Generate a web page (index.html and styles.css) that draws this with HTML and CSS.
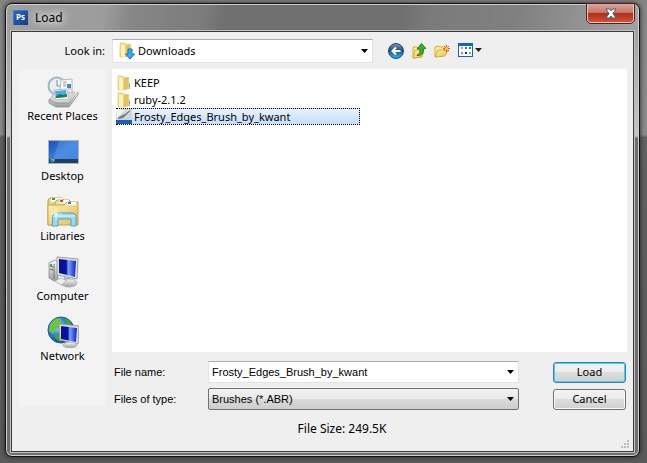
FILE: index.html
```html
<!DOCTYPE html>
<html lang="en">
<head>
<meta charset="utf-8">
<title>Load</title>
<link rel="stylesheet" href="styles.css">
</head>
<body>
<svg class="defs" width="0" height="0" aria-hidden="true">
  <defs>
    <linearGradient id="gold" x1="0" y1="0" x2="1" y2="1"><stop offset="0" stop-color="#fdf3bd"/><stop offset="1" stop-color="#e3bb58"/></linearGradient>
    <linearGradient id="blue" x1="0" y1="0" x2="1" y2="1"><stop offset="0" stop-color="#1a4fb4"/><stop offset=".5" stop-color="#3d80dc"/><stop offset="1" stop-color="#2f70d2"/></linearGradient>
    <linearGradient id="navy" x1="0" y1="0" x2="1" y2="1"><stop offset="0" stop-color="#2c6cc0"/><stop offset="1" stop-color="#123c88"/></linearGradient>
    <linearGradient id="screen" x1="0" y1="0" x2="1" y2="0"><stop offset="0" stop-color="#0a1480"/><stop offset=".42" stop-color="#0510a8"/><stop offset=".55" stop-color="#7ea2f2"/><stop offset="1" stop-color="#0b22c8"/></linearGradient>
    <linearGradient id="steel" x1="0" y1="0" x2="0" y2="1"><stop offset="0" stop-color="#fafafa"/><stop offset="1" stop-color="#9a9da0"/></linearGradient>
    <linearGradient id="back" x1="0" y1="0" x2="0" y2="1"><stop offset="0" stop-color="#8798a8"/><stop offset=".45" stop-color="#1c5288"/><stop offset="1" stop-color="#35b6e6"/></linearGradient>
    <radialGradient id="globe" cx=".35" cy=".35" r=".7"><stop offset="0" stop-color="#a5dcff"/><stop offset=".5" stop-color="#2f7fd6"/><stop offset="1" stop-color="#113f92"/></radialGradient>
    <symbol id="folder" viewBox="0 0 16 16">
      <path d="M2 1h5l1 2v12H2z" fill="#f3dc8c" stroke="#d9bd6b" stroke-width=".6"/>
      <path d="M7 2h6v12l-5 1z" fill="#ecd079"/>
      <path d="M3 2l4 1v13l-4-2z" fill="#fdf2b8"/>
      <path d="M8 4l4-2v12l-4 1z" fill="#e2c164"/>
      <path d="M13.500 8v6" stroke="#d9bd6b"/>
      <path d="M13.500 9v3" stroke="#57aee2"/>
    </symbol>
  </defs>
</svg>
<main class="dialog">
  <header class="titlebar">
    <svg class="app-icon" viewBox="0 0 15 15" aria-hidden="true"><rect width="15" height="15" fill="url(#navy)"/><path d="M0 15V0h15" fill="none" stroke="#5a8fd8"/><text x="3" y="10" class="app-mark">Ps</text></svg>
    <h1 class="title">Load</h1>
    <button class="close" aria-label="Close"><svg width="12" height="11" viewBox="0 0 12 11"><path d="M1 1h3.500l1.500 2 1.500-2H11L8 5.500 11 10H7.500L6 8l-1.500 2H1l3-4.500z" fill="#fff" stroke="#505970"/></svg></button>
  </header>
  <div class="client">
    <div class="lookbar">
      <label class="look-label" for="look">Look in:</label>
      <div class="combo look-combo">
        <svg width="16" height="18" viewBox="0 0 16 18" aria-hidden="true"><use href="#folder" x="-1" width="16" height="16"/><path d="M9 7h4v5h2.500L11 17l-4.500-5H9z" fill="#3fabea" stroke="#1a72b5"/></svg>
        <select id="look"><option>Downloads</option></select>
      </div>
      <div class="tools">
        <button aria-label="Back"><svg width="16" height="16" viewBox="0 0 16 16"><circle cx="8" cy="8" r="7.500" fill="url(#back)" stroke="#23486e"/><path d="M12.500 8H5M8 4.500L4.500 8 8 11.500" fill="none" stroke="#fff" stroke-width="2"/></svg></button>
        <button aria-label="Up one level"><svg width="14" height="16" viewBox="0 0 14 16"><path d="M1 4h4l1 1h3v9l-8 1z" fill="#fff0a0" stroke="#dfa924"/><path d="M3 7h9l-2 7-9 1z" fill="url(#gold)" stroke="#dfa924"/><path d="M5 12c3-1 3-3 3-6H5l4.500-5.500L14 5.500h-2.500c0 5-1 7-6.500 7z" fill="#3caf28" stroke="#176f13" stroke-width=".8"/></svg></button>
        <button aria-label="New folder"><svg width="16" height="14" viewBox="0 0 16 14"><path d="M1 13V3l4-1 1 1h5v3" fill="#fff0a0" stroke="#dfa924"/><path d="M1 13l3-7h10l-3 6z" fill="url(#gold)" stroke="#dfa924"/><path d="M12.500 1v7M9 4.500h7M10 2l5 5M15 2l-5 5" stroke="#f0501a"/><circle cx="12.500" cy="4.500" r="1.500" fill="#ffd05a"/></svg></button>
        <button aria-label="View"><svg width="25" height="15" viewBox="0 0 25 15"><rect x=".5" y=".5" width="14" height="13" fill="#fff" stroke="#0866ce"/><path d="M0 0h15v3H0z" fill="#0866ce"/><path d="M3 4h2v2H3z" fill="#a49ac4"/><path d="M7 4h2v2H7z" fill="#2b7ed8"/><path d="M11 4h2v2h-2z" fill="#129a18"/><path d="M3 9h2v2H3z" fill="#f47350"/><path d="M7 9h2v2H7z" fill="#082a94"/><path d="M11 9h2v2h-2z" fill="#c9a20a"/><path d="M17 5h7l-3.500 4z" fill="#222"/></svg></button>
      </div>
    </div>
    <nav class="places" aria-label="Places">
      <button><svg viewBox="0 0 32 32" aria-hidden="true"><circle cx="10" cy="10" r="8.500" fill="#e8f0f5" stroke="#a6b6c0" stroke-width="2"/><path d="M10 4v6h4" fill="none" stroke="#78909e"/><path d="M14 4l11-1v15H13z" fill="#fdfdfd" stroke="#b5b8ba"/><path d="M16 6h4M16 8h3M16 10h3M21 13h3" stroke="#999"/><path d="M20 8h4v4h-4z" fill="#3e8ac6"/><path d="M3 23l5-7h20l-6 10-14 1z" fill="#d8d8d6" stroke="#aaa" stroke-width=".6"/><path d="M7 14l13-1 2 10-13 1z" fill="#fff" stroke="#bbb"/><path d="M8 15l11-1 1 7-11 1z" fill="#48aee9"/><path d="M9 20l4-2 3 1 4-1v3l-11 1z" fill="#257b50"/><path d="M2 23v4l7 4h13l9-12v-3l-9 11H9z" fill="url(#steel)" stroke="#85878a" stroke-width=".7"/></svg><span>Recent Places</span></button>
      <button><svg viewBox="0 0 32 32" aria-hidden="true"><rect x="1" y="4" width="31" height="24" fill="#a9b3c2"/><rect x="2" y="5" width="29" height="22" fill="url(#blue)"/><path d="M12 5h19v18H6z" fill="#6aa8f4" opacity=".35"/><path d="M2 23h29v4H2z" fill="#263f5c"/><circle cx="5.500" cy="24" r="2.500" fill="#2385bb"/><path d="M4 23h2v1H4z" fill="#f08a30"/><path d="M6 23h1v2H6z" fill="#8fd146"/></svg><span>Desktop</span></button>
      <button><svg viewBox="0 0 32 32" aria-hidden="true"><path d="M1 29V4l2-2h12l3 3v22z" fill="#ead484" stroke="#b99b4e"/><path d="M4 2h12v4H4z" fill="#fff"/><path d="M5 2h3v2H5z" fill="#1fad32"/><path d="M8 29V6l2-2h12l3 3v20z" fill="#f2dd92" stroke="#c1a454"/><path d="M12 4h10v3H12z" fill="#fff"/><path d="M13 4h3v2h-3z" fill="#d84328"/><path d="M1 29V9h16l3-3h11v23z" fill="url(#gold)" stroke="#c1a454"/><path d="M20 6h9v3h-9z" fill="#fff"/><path d="M21 6h3v2h-3z" fill="#2285d1"/><path d="M5 30l1-11 3-2h17l3 2v11h-5v-7H11v7z" fill="#9dd7ee" stroke="#559fc6"/><path d="M7 20h21" stroke="#e2f7ff"/><path d="M9 12v12M3 18h12M6 15l6 6M12 15l-6 6" stroke="#fff" stroke-width=".7"/></svg><span>Libraries</span></button>
      <button><svg viewBox="0 0 32 32" aria-hidden="true"><path d="M2 7l6-3 3 2v17l-4 2-5-3z" fill="url(#steel)" stroke="#8d9196" stroke-width=".8"/><path d="M7 8v15" stroke="#777"/><path d="M3 10l3 1M3 13l3 1" stroke="#666"/><path d="M3 8h2v2H3z" fill="#37b343"/><path d="M10 1l21 2-1 20-20-4z" fill="#dfe1e3" stroke="#9a9ea4"/><path d="M12 3l17 2-1 16-16-4z" fill="url(#screen)"/><path d="M17 21l6 1v4h-6z" fill="#aeb3b8"/><ellipse cx="22" cy="27" rx="8" ry="4" fill="url(#steel)" stroke="#aaa" stroke-width=".8"/><path d="M8 25l6-3 6 3-6 4z" fill="#eef0f1" stroke="#aaa" stroke-width=".8"/></svg><span>Computer</span></button>
      <button><svg viewBox="0 0 32 32" aria-hidden="true"><circle cx="14" cy="14" r="13" fill="url(#globe)" stroke="#245a9d"/><path d="M3 8l5-5 6-1-1 4 4 2-3 4-5 1-3 5-4-3z" fill="#6dc243"/><path d="M17 2l5 2 3 5-5-1zM8 18l5 2 1 6-4-2-3-4z" fill="#43a62f"/><path d="M12 8l20 2-1 18-18-4z" fill="#dfe2e5" stroke="#989ea5"/><path d="M14 10l16 2-1 14-15-3z" fill="url(#screen)"/><path d="M20 26l5 1v3h-5z" fill="#a9adb2"/><ellipse cx="23" cy="29" rx="7" ry="3" fill="url(#steel)" stroke="#aaa" stroke-width=".8"/></svg><span>Network</span></button>
    </nav>
    <ul class="files" aria-label="Files">
      <li><button><svg width="16" height="16" aria-hidden="true"><use href="#folder"/></svg>KEEP</button></li>
      <li><button><svg width="16" height="16" aria-hidden="true"><use href="#folder"/></svg>ruby-2.1.2</button></li>
      <li><button class="selected"><svg width="16" height="15" viewBox="0 0 16 15" aria-hidden="true"><path d="M0 0h16v11H0z" fill="#cfd3d4"/><path d="M0 0l9 1-8 8z" fill="#f4f6f6"/><path d="M2 10c1-4 4-2 6-5l5-4 1 1-5 5c-2 3-4 2-7 3z" fill="#70777b"/><path d="M8 5l5-4" stroke="#fff"/><path d="M0 11h16v4H0z" fill="#1962ae"/></svg>Frosty_Edges_Brush_by_kwant</button></li>
    </ul>
    <div class="form">
      <label for="name">File name:</label>
      <div class="combo name-combo"><input id="name" value="Frosty_Edges_Brush_by_kwant"><button class="drop" aria-label="Show file names"></button></div>
      <button class="push primary">Load</button>
      <label for="type">Files of type:</label>
      <select id="type" class="type-select"><option>Brushes (*.ABR)</option></select>
      <button class="push">Cancel</button>
    </div>
    <p class="size">File Size: 249.5K</p>
    <svg class="grip" width="9" height="9" viewBox="0 0 9 9" aria-hidden="true"><path d="M6 0h2v2H6zM3 3h2v2H3zM6 3h2v2H6zM0 6h2v2H0zM3 6h2v2H3zM6 6h2v2H6z" fill="#bcbcbc"/></svg>
  </div>
</main>
</body>
</html>
```
FILE: styles.css
```css
* { box-sizing: border-box; }
body {
  --arrow: url("data:image/svg+xml,%3Csvg xmlns='http://www.w3.org/2000/svg' width='7' height='4'%3E%3Cpath d='M0 0h7L3.500 4z'/%3E%3C/svg%3E");
  margin: 0;
  min-height: 100vh;
  display: flex;
  padding: 3px 7px 6px 5px;
  background: linear-gradient(#858585, #8c8c8c 135px, #626262 137px, #5a5a5a);
  font: 11px/16px "Noto Sans", "Open Sans", sans-serif;
  color: #000;
}
button, input, select { font: inherit; color: inherit; border: 0; margin: 0; padding: 0; background: none; }
svg { display: block; flex: none; }
.defs { position: absolute; }
.dialog {
  flex: 1;
  display: flex;
  flex-direction: column;
  padding: 0 5px 4px;
  border: 1px solid #111;
  border-radius: 7px;
  box-shadow: inset 0 0 0 1px #d0d0d0, 0 0 5px #222;
  background:
    linear-gradient(transparent 30px, #c4c4c4 132px, #6e716e 134px),
    linear-gradient(100deg, #a0a0a0, #9c9c9c 14%, #868686 18%, #7c7c7c 28%, #707070 31%, #707070 56%, #7b7b7b 60%, #808080 72%, #a8a8a8 92%);
}
.titlebar { display: flex; align-items: flex-start; height: 27px; padding-left: 2px; }
.app-icon { width: 15px; height: 15px; margin-top: 6px; }
.app-mark { font: bold 8px "Open Sans", sans-serif; fill: #fff; }
.title { margin: 6px 0 0 7px; font-size: 12px; line-height: 16px; font-weight: 400; text-shadow: 0 0 8px #fff, 0 0 8px #fff; }
.close {
  display: grid;
  place-items: center;
  width: 47px;
  height: 19px;
  margin-left: auto;
  border: 1px solid #e7c5c0;
  border-top: 0;
  border-radius: 0 0 4px 4px;
  outline: 1px solid #54201b;
  background: linear-gradient(#d8a69d, #ca7467 48%, #ae2d1a 50%, #cf5137);
}
.client {
  position: relative;
  flex: 1;
  display: grid;
  grid-template: 37px minmax(283px, 1fr) 55px 44px / 87px 1fr;
  column-gap: 6px;
  padding: 0 6px 0 7px;
  border: 1px solid #3b3b3b;
  outline: 1px solid #bfbfbf;
  background: #efefef;
}
.lookbar { grid-column: 1 / -1; display: flex; align-items: center; }
.look-label { width: 86px; margin-right: 7px; text-align: right; }
.combo { display: flex; align-items: center; border: 1px solid #e2e3ea; border-top-color: #abadb3; background: #fff; }
.look-combo { width: 261px; height: 24px; padding-left: 6px; margin-top: 1px; }
.combo select { flex: 1; align-self: stretch; padding-left: 3px; }
select { appearance: none; background: var(--arrow) no-repeat right 4px center; }
.tools { display: flex; align-items: center; gap: 8px; margin-left: 15px; }
.places { grid-row: 2 / 4; grid-column: 1; background: #f3f3f3; }
.places button { display: flex; flex-direction: column; align-items: center; width: 100%; height: 60px; padding-top: 7px; }
.places svg { width: 32px; height: 32px; }
.files { margin: 0; padding: 5px 4px; list-style: none; background: #fff; }
.files button { display: flex; align-items: center; gap: 2px; width: 244px; height: 17px; line-height: 17px; }
.files .selected { border: 1px dotted #000; background: linear-gradient(#e8f2fd, #c5ddfa); }
.selected svg { margin-left: -1px; }
.form {
  grid-column: 2;
  display: grid;
  grid-template: 22px 22px / 94px 1fr 73px;
  gap: 5px 0;
  padding: 9px 1px 0 2px;
  align-items: center;
  font: 11px/16px "Liberation Sans", Arial, sans-serif;
}
.name-combo, .type-select { height: 22px; margin-right: 34px; }
.name-combo input { flex: 1; min-width: 0; padding-left: 3px; }
.drop { width: 7px; height: 4px; margin-right: 4px; background: #000; clip-path: polygon(0 0, 100% 0, 50% 100%); }
.type-select {
  padding-left: 3px;
  border: 1px solid #707070;
  border-radius: 2px;
  background: var(--arrow) no-repeat right 4px center, linear-gradient(#f2f2f2, #e8e8e8 50%, #dadada 50%, #cdcdcd);
}
.push { height: 21px; border: 1px solid #707070; border-radius: 3px; box-shadow: inset 0 0 0 1px #fafafa; background: linear-gradient(#f2f2f2, #ebebeb 50%, #ddd 50%, #cfcfcf); font: 11px/16px "Noto Sans", "Open Sans", sans-serif; }
.primary { border-color: #3c7fb1; box-shadow: inset 0 0 0 1px #48cdf4; }
.size { grid-column: 1 / -1; margin: 14px 0 0; padding-left: 38px; font-size: 12px; text-align: center; }
.grip { position: absolute; right: 3px; bottom: 2px; }
```
